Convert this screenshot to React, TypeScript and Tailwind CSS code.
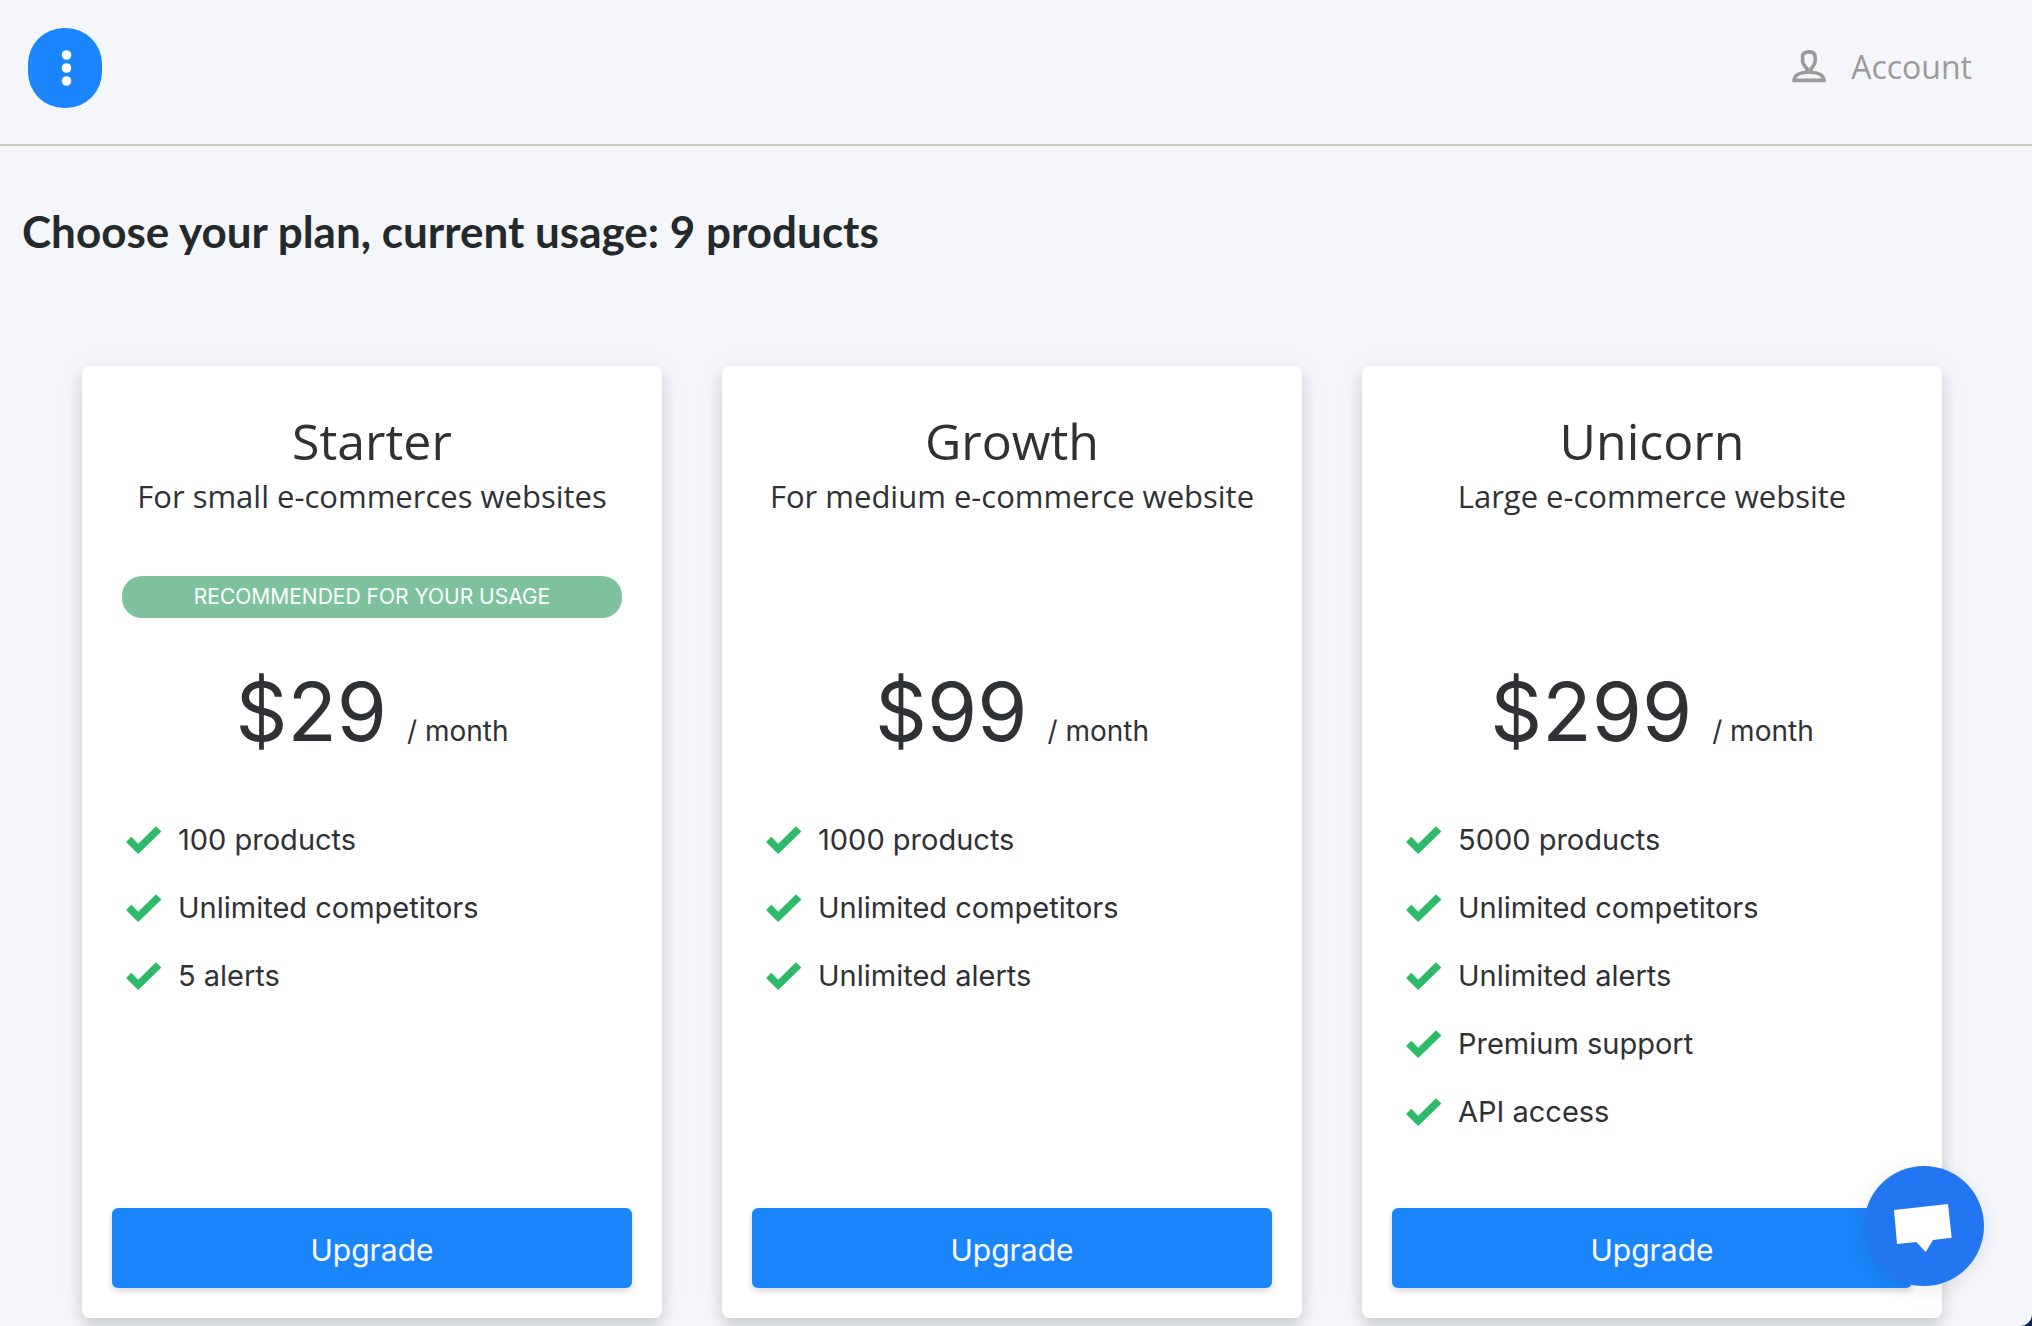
import React from "react";

type Plan = {
  name: string;
  tagline: string;
  price: string;
  features: string[];
  recommended?: boolean;
};

const plans: Plan[] = [
  {
    name: "Starter",
    tagline: "For small e-commerces websites",
    price: "$29",
    features: ["100 products", "Unlimited competitors", "5 alerts"],
    recommended: true,
  },
  {
    name: "Growth",
    tagline: "For medium e-commerce website",
    price: "$99",
    features: ["1000 products", "Unlimited competitors", "Unlimited alerts"],
  },
  {
    name: "Unicorn",
    tagline: "Large e-commerce website",
    price: "$299",
    features: [
      "5000 products",
      "Unlimited competitors",
      "Unlimited alerts",
      "Premium support",
      "API access",
    ],
  },
];

function CheckIcon() {
  return (
    <svg width="36" height="28" viewBox="0 0 36 28" className="shrink-0" aria-hidden="true">
      <path d="M0 16 L5.300 10.700 L12.200 17.800 L30 0.300 L35.400 5.500 L12.200 28 Z" fill="#2dbb68" />
    </svg>
  );
}

function UserIcon() {
  return (
    <svg width="34" height="34" viewBox="0 0 36 36" fill="none" stroke="#9b9b9b" strokeWidth="3.8" aria-hidden="true">
      <path d="M16 20 V23.500 C8 23.800 2.400 27 2.200 32.200 H33.800 C33.600 27 28 23.800 20 23.500 V20 C22.500 17.500 24.500 15 24.500 11.500 V7 C24.500 3.500 21.800 2 18 2 C14.200 2 11.200 3.500 11.200 7 V11.500 C11.200 15 13.500 17.500 16 20 Z" />
    </svg>
  );
}

function PlanCard({ plan }: { plan: Plan }) {
  return (
    <section className="flex flex-col rounded-lg bg-white px-[30px] pt-[45px] pb-[30px] shadow-[0_8px_14px_rgba(0,0,0,0.14),0_0_36px_rgba(0,0,0,0.05)]">
      <h2 className="text-center font-['Open_Sans',sans-serif] text-[50px] leading-[60px]">
        {plan.name}
      </h2>
      <p className="text-center font-['Open_Sans',sans-serif] text-[31px] leading-[50px] whitespace-nowrap">
        {plan.tagline}
      </p>
      <div className="mx-[10px] mt-[55px] h-[42px]">
        {plan.recommended && (
          <div className="rounded-[20px] bg-[#7ec29d] text-center text-[21px] leading-[42px] text-white">
            RECOMMENDED FOR YOUR USAGE
          </div>
        )}
      </div>
      <p className="mt-[44px] flex items-baseline justify-center gap-5 leading-[100px]">
        <span className="text-[81px]">{plan.price}</span>
        <span className="text-[28px]">/ month</span>
      </p>
      <ul className="mt-[25px] mb-[62px] flex flex-1 flex-col px-[14px]">
        {plan.features.map((feature) => (
          <li key={feature} className="flex h-[68px] items-center gap-4 text-[29px]">
            <CheckIcon />
            {feature}
          </li>
        ))}
      </ul>
      <button
        type="button"
        className="h-20 rounded-md bg-[#1b85fb] pt-1 text-[30px] text-white shadow-[0_3px_6px_rgba(0,0,0,0.16)]"
      >
        Upgrade
      </button>
    </section>
  );
}

export default function App() {
  return (
    <div className="bg-[#0b2350]">
      <div className="min-h-screen rounded-br-[12px] bg-[#f5f6fa] pb-2 font-['Inter',sans-serif] text-[#303135]">
        <header className="flex h-[146px] items-start justify-between border-b-2 border-[#cccdc9] pt-7 pr-[60px] pl-7">
          <button
            type="button"
            aria-label="Menu"
            className="flex h-20 w-[74px] items-center justify-center rounded-[36px] bg-[#1b85fb]"
          >
            <svg width="14" height="38" viewBox="0 0 14 38" fill="white" aria-hidden="true">
              <circle cx="8.500" cy="6" r="4.800" />
              <circle cx="8.500" cy="19" r="4.800" />
              <circle cx="8.500" cy="32" r="4.800" />
            </svg>
          </button>
          <a
            href="#account"
            className="flex h-[78px] items-center gap-[25px] font-['Open_Sans',sans-serif] text-[32px] text-[#9b9b9b]"
          >
            <UserIcon />
            Account
          </a>
        </header>
        <main>
          <h1 className="pt-[55px] pl-[22px] font-['Lato',sans-serif] text-[44px] leading-[60px] font-bold text-[#24292c]">
            Choose your plan, current usage: 9 products
          </h1>
          <div className="mt-[105px] grid grid-cols-3 gap-[60px] pr-[90px] pl-[82px]">
            {plans.map((plan) => (
              <PlanCard key={plan.name} plan={plan} />
            ))}
          </div>
        </main>
      </div>
      <button
        type="button"
        aria-label="Open chat"
        className="fixed right-12 bottom-10 size-[120px] rounded-full bg-[#2376f2] shadow-[0_4px_20px_rgba(0,0,0,0.09)]"
      >
        <svg viewBox="0 0 120 120" className="size-full" aria-hidden="true">
          <path d="M30 44 L84 38 L87.700 71.700 L69 74 L61.700 86 L52.300 76 L33 78 Z" fill="white" />
        </svg>
      </button>
    </div>
  );
}
